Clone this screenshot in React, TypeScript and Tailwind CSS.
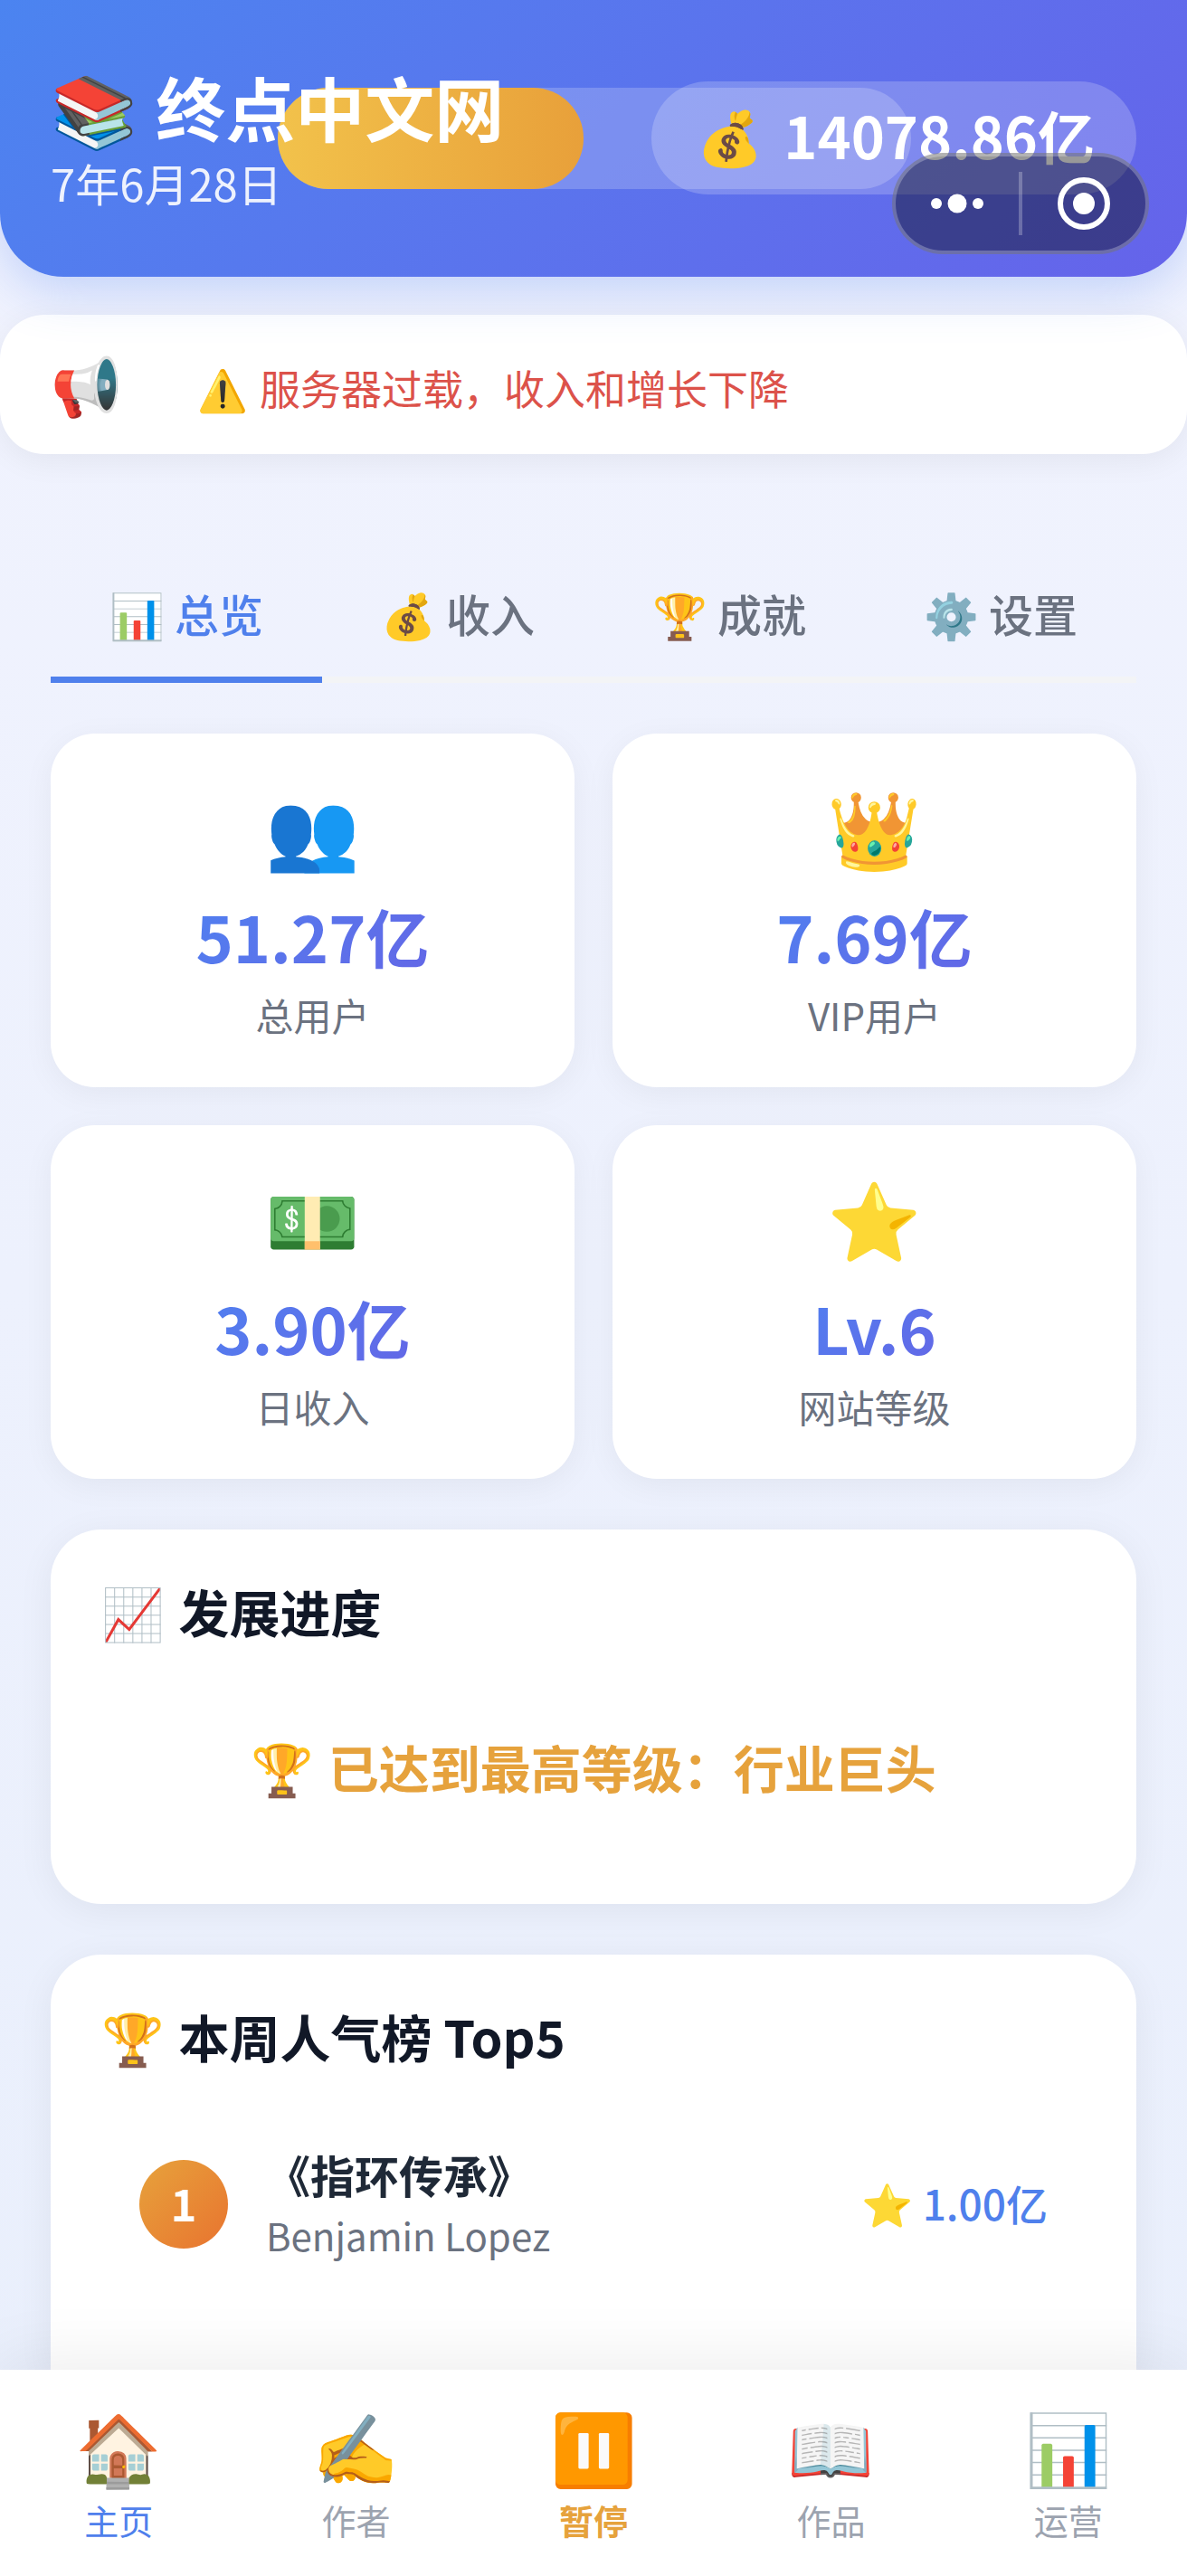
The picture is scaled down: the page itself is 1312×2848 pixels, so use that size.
import { useState } from "react";

const tabs = [
  { id: "overview", icon: "📊", label: "总览" },
  { id: "income", icon: "💰", label: "收入" },
  { id: "achievements", icon: "🏆", label: "成就" },
  { id: "settings", icon: "⚙️", label: "设置" },
];

const stats = [
  { icon: "👥", value: "51.27亿", label: "总用户" },
  { icon: "👑", value: "7.69亿", label: "VIP用户" },
  { icon: "💵", value: "3.90亿", label: "日收入" },
  { icon: "⭐", value: "Lv.6", label: "网站等级" },
];

const topBooks = [{ rank: 1, title: "《指环传承》", author: "Benjamin Lopez", score: "1.00亿" }];

const navItems = [
  { href: "#home", icon: "🏠", label: "主页", color: "text-[#4f80ec]" },
  { href: "#authors", icon: "✍️", label: "作者", color: "text-[#9ca3af]" },
  { href: "#pause", icon: "⏸️", label: "暂停", color: "text-[#e6a23c] font-bold" },
  { href: "#works", icon: "📖", label: "作品", color: "text-[#9ca3af]" },
  { href: "#operations", icon: "📊", label: "运营", color: "text-[#9ca3af]" },
];

function Emoji({ children }: { children: string }) {
  return <span className="mr-[3px]">{children}</span>;
}

function Capsule() {
  return (
    <div className="absolute right-[42px] top-[169px] flex h-[112px] w-[284px] items-center rounded-full border-4 border-white/25 bg-black/40">
      <button aria-label="更多" className="flex flex-1 justify-center">
        <svg width="60" height="22" viewBox="0 0 60 22" fill="#fff">
          <circle cx="7" cy="11" r="6" />
          <circle cx="30" cy="11" r="10.5" />
          <circle cx="53" cy="11" r="6" />
        </svg>
      </button>
      <span className="h-[70px] w-1 bg-white/25" />
      <button aria-label="关闭" className="flex flex-1 justify-center">
        <svg width="58" height="58" viewBox="0 0 58 58">
          <circle cx="29" cy="29" r="26" fill="none" stroke="#fff" strokeWidth="6" />
          <circle cx="29" cy="29" r="12" fill="#fff" />
        </svg>
      </button>
    </div>
  );
}

function Header() {
  return (
    <header className="relative rounded-b-[70px] bg-linear-135 from-[#4b84f0] to-[#6563ea] px-14 pb-[70px] pt-[68px] text-white shadow-[0_14px_56px_rgba(79,128,240,0.3)]">
      <div className="absolute right-[305px] top-[97px] h-[112px] w-[700px] rounded-full bg-white/20">
        <div className="h-full w-[338px] rounded-full bg-linear-to-r from-[#f2c24b] to-[#e8a03a]" />
      </div>
      <div className="relative flex items-center justify-between">
        <div>
          <h1 className="text-[77px] font-bold leading-[100px]">
            <Emoji>📚</Emoji> 终点中文网
          </h1>
          <p className="text-[49px] leading-[68px] text-white/90">7年6月28日</p>
        </div>
        <div className="flex items-center gap-[22px] rounded-full bg-white/20 pb-8 pl-[51px] pr-[46px] pt-6 text-[63px] font-bold leading-[69px]">
          <span className="text-[59px]">💰</span>
          <span>14078.86亿</span>
        </div>
      </div>
      <Capsule />
    </header>
  );
}

function Notice() {
  return (
    <div className="mt-[42px] flex h-[154px] items-center rounded-[49px] bg-white px-14 shadow-[0_7px_35px_rgba(0,0,0,0.06)]">
      <span className="w-[162px] pb-1 text-[63px]">📢</span>
      <p className="pt-2 text-[45px] text-[#dc524a]">
        <Emoji>⚠️</Emoji> 服务器过载，收入和增长下降
      </p>
    </div>
  );
}

export default function App() {
  const [active, setActive] = useState("overview");

  return (
    <div className="flex min-h-screen flex-col bg-linear-to-b from-[#f1f3fe] to-[#e9effc] font-['Noto_Sans_CJK_SC','Noto_Color_Emoji',sans-serif]">
      <Header />
      <Notice />

      <main className="flex flex-1 flex-col px-14">
        <div role="tablist" className="mt-[105px] flex border-b-7 border-[#f3f4f6]">
          {tabs.map((tab) => (
            <button
              key={tab.id}
              role="tab"
              aria-selected={active === tab.id}
              onClick={() => setActive(tab.id)}
              className={`-mb-[7px] flex-1 border-b-7 pb-[33px] pt-[34px] text-[49px] font-medium leading-[74px] ${
                active === tab.id ? "border-[#4f80ec] text-[#4f80ec]" : "border-transparent text-[#6b7280]"
              }`}
            >
              {tab.icon} {tab.label}
            </button>
          ))}
        </div>

        <div className="mt-14 grid grid-cols-2 gap-[42px]">
          {stats.map((stat) => (
            <div
              key={stat.label}
              className="flex h-[391px] flex-col items-center rounded-[49px] bg-white pt-[45px] shadow-[0_7px_35px_rgba(0,0,0,0.05)]"
            >
              <span className="text-[84px] leading-[112px]">{stat.icon}</span>
              <span className="mt-[11px] bg-linear-135 from-[#4f80f0] to-[#6366e6] bg-clip-text text-[70px] font-bold leading-[112px] text-transparent">
                {stat.value}
              </span>
              <span className="text-[42px] leading-[62px] text-[#6b7280]">{stat.label}</span>
            </div>
          ))}
        </div>

        <section className="mt-14 h-[414px] rounded-[56px] bg-white px-14 pt-[50px] shadow-[0_7px_42px_rgba(0,0,0,0.06)]">
          <h2 className="text-[56px] font-bold leading-[80px] text-[#111827]">
            <Emoji>📈</Emoji> 发展进度
          </h2>
          <p className="mt-[92px] text-center text-[56px] font-bold leading-[80px] text-[#e6a23c]">
            <Emoji>🏆</Emoji> 已达到最高等级：行业巨头
          </p>
        </section>

        <section className="mt-14 flex-1 rounded-t-[56px] bg-white px-14 pt-[50px] shadow-[0_7px_42px_rgba(0,0,0,0.06)]">
          <h2 className="text-[56px] font-bold leading-[80px] text-[#111827]">
            <Emoji>🏆</Emoji> 本周人气榜 Top5
          </h2>
          <ol className="mt-[51px] px-[42px]">
            {topBooks.map((book) => (
              <li key={book.rank} className="flex items-center py-7">
                <span className="flex h-[98px] w-[98px] items-center justify-center rounded-full bg-linear-135 from-[#e6a23c] to-[#e8732f] pb-1 text-[49px] font-bold text-white">
                  {book.rank}
                </span>
                <div className="ml-[42px] flex-1">
                  <h3 className="text-[49px] font-bold leading-[68px] text-[#1f2937]">{book.title}</h3>
                  <p className="text-[42px] leading-[66px] text-[#6b7280]">{book.author}</p>
                </div>
                <span className="pb-1 text-[46px] font-medium text-[#4f80ec]">⭐ {book.score}</span>
              </li>
            ))}
          </ol>
        </section>
      </main>

      <nav className="sticky bottom-0 flex h-[228px] bg-white pt-[29px] shadow-[0_-7px_70px_rgba(0,0,0,0.08)]">
        {navItems.map((item) => (
          <a key={item.label} href={item.href} className={`flex flex-1 flex-col items-center gap-[5px] ${item.color}`}>
            <span className="text-[77px] leading-[108px]">{item.icon}</span>
            <span className="text-[38px] leading-[48px]">{item.label}</span>
          </a>
        ))}
      </nav>
    </div>
  );
}
